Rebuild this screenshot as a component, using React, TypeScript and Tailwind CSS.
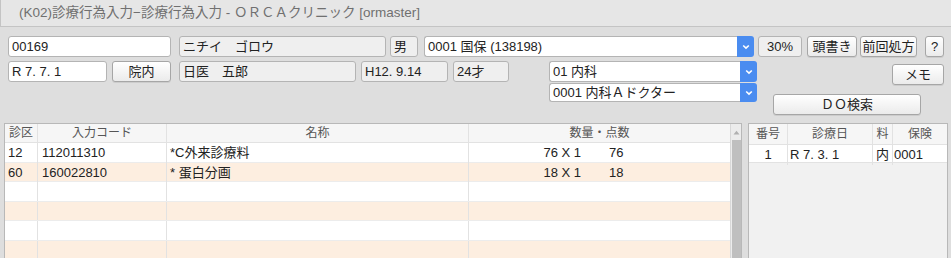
import type { ReactNode } from "react";

const font = {
  fontFamily:
    '"Liberation Sans", "Noto Sans CJK JP", sans-serif',
};

function Field({
  w,
  children,
  ro = false,
  className = "",
}: {
  w: string;
  children?: ReactNode;
  ro?: boolean;
  className?: string;
}) {
  return (
    <div
      className={`flex h-[21px] items-center rounded-[3px] border border-[#b4b4b4] px-[3px] text-[13px] text-[#222] ${
        ro ? "bg-[#efefef]" : "bg-white"
      } ${w} ${className}`}
    >
      {children}
    </div>
  );
}

function Btn({
  w,
  children,
  className = "",
}: {
  w: string;
  children: ReactNode;
  className?: string;
}) {
  return (
    <div
      className={`flex h-[21px] items-center justify-center rounded-[3px] border border-[#a6a6a6] bg-gradient-to-b from-[#ffffff] to-[#ebebeb] text-[13px] text-[#222] shadow-[0_1px_0_rgba(0,0,0,0.08)] ${w} ${className}`}
    >
      {children}
    </div>
  );
}

function Select({
  w,
  h = "h-[21px]",
  children,
  className = "",
}: {
  w: string;
  h?: string;
  children: ReactNode;
  className?: string;
}) {
  return (
    <div
      className={`flex ${h} ${w} ${className}`}
    >
      <div className="flex flex-1 items-center rounded-l-[3px] border border-r-0 border-[#b4b4b4] bg-white px-[3px] text-[13px] text-[#222]">
        {children}
      </div>
      <div className="flex w-[17px] items-center justify-center rounded-r-[3px] bg-[#4a8cf0]">
        <svg width="8" height="6" viewBox="0 0 8 6">
          <path
            d="M1.2 1.5 L4 4.2 L6.8 1.5"
            fill="none"
            stroke="white"
            strokeWidth="1.6"
          />
        </svg>
      </div>
    </div>
  );
}

const rows = [
  { k: "12", code: "112011310", name: "*C外来診療料", q: "76 X 1", p: "76" },
  { k: "60", code: "160022810", name: "* 蛋白分画", q: "18 X 1", p: "18" },
  null,
  null,
  null,
  null,
];

export default function App() {
  return (
    <div
      className="h-[258px] w-[951px] overflow-hidden bg-[#dedede]"
      style={font}
    >
      {/* Title */}
      <div className="flex h-[27px] items-center border-b border-l border-[#c4c4c4] bg-[#e6e6e6] pl-[18px] text-[13.5px] text-[#707070]">
        (K02)診療行為入力−診療行為入力 - ＯＲＣＡクリニック [ormaster]
      </div>

      {/* Row 1 */}
      <div className="mt-[9px] flex items-start pl-[8px]">
        <Field w="w-[163px]">00169</Field>
        <Field w="w-[207px]" ro className="ml-[8px]">
          ニチイ　ゴロウ
        </Field>
        <Field w="w-[28px]" ro className="ml-[4px]">
          男
        </Field>
        <Select w="w-[330px]" className="ml-[6px]">
          0001 国保 (138198)
        </Select>
        <Field w="w-[44px]" ro className="ml-[4px] justify-center">
          30%
        </Field>
        <Btn w="w-[50px]" className="ml-[5px]">
          頭書き
        </Btn>
        <Btn w="w-[57px]" className="ml-[3px]">
          前回処方
        </Btn>
        <Btn w="w-[19px]" className="ml-[8px]">
          ?
        </Btn>
      </div>

      {/* Row 2 */}
      <div className="mt-[4px] flex items-start pl-[8px]">
        <Field w="w-[99px]">R 7. 7. 1</Field>
        <Btn w="w-[59px]" className="ml-[5px]">
          院内
        </Btn>
        <Field w="w-[177px]" ro className="ml-[8px]">
          日医　五郎
        </Field>
        <Field w="w-[87px]" ro className="ml-[5px]">
          H12. 9.14
        </Field>
        <Field w="w-[56px]" ro className="ml-[5px]">
          24才
        </Field>
        <div className="ml-[40px] flex flex-col gap-[1px]">
          <Select w="w-[208px]">01 内科</Select>
          <Select w="w-[208px]" h="h-[19px]">
            0001 内科Ａドクター
          </Select>
        </div>
        <div className="flex w-[187px] flex-col">
          <Btn w="w-[52px]" className="mt-[3px] self-end">
            メモ
          </Btn>
          <Btn w="w-[148px]" className="ml-[16px] mt-[9px] h-[20px]">
            ＤＯ検索
          </Btn>
        </div>
      </div>

      {/* Tables */}
      <div className="mt-[8px] flex items-start pl-[4px]">
        {/* Left table */}
        <div className="flex h-[140px] w-[738px] border border-[#b8b8b8] bg-white">
          <div className="flex-1">
            <div className="grid h-[19px] grid-cols-[33px_129px_302px_1fr] border-b border-[#e2e2e2] bg-[#f6f6f6] text-[12px] text-[#555]">
              <div className="flex items-center justify-center border-r border-[#e2e2e2]">
                診区
              </div>
              <div className="flex items-center justify-center border-r border-[#e2e2e2]">
                入力コード
              </div>
              <div className="flex items-center justify-center border-r border-[#e2e2e2]">
                名称
              </div>
              <div className="flex items-center justify-center">
                数量・点数
              </div>
            </div>
            {rows.map((r, i) => (
              <div
                key={i}
                className={`grid h-[19.5px] grid-cols-[33px_129px_302px_1fr] border-b border-[#ececec] text-[13px] text-[#222] ${
                  i % 2 === 1 ? "bg-[#fdeee0]" : "bg-white"
                }`}
              >
                <div className="flex items-center border-r border-[#e2e2e2] pl-[3px]">
                  {r?.k}
                </div>
                <div className="flex items-center border-r border-[#e2e2e2] pl-[4px]">
                  {r?.code}
                </div>
                <div className="flex items-center border-r border-[#e2e2e2] pl-[3px]">
                  {r?.name}
                </div>
                <div className="flex items-center">
                  {r && (
                    <>
                      <span className="w-[112px] text-right">{r.q}</span>
                      <span className="ml-[28px]">{r.p}</span>
                    </>
                  )}
                </div>
              </div>
            ))}
          </div>
          {/* Scrollbar */}
          <div className="flex w-[11px] flex-col items-center border-l border-[#d8d8d8] bg-[#ececec]">
            <svg width="7" height="5" viewBox="0 0 7 5" className="mt-[6px]">
              <path d="M0.5 4.5 L3.5 0.8 L6.5 4.5 Z" fill="#b0b0b0" />
            </svg>
            <div className="mt-[5px] w-[9px] flex-1 bg-[#bfbfbf]" />
          </div>
        </div>

        {/* Right table */}
        <div className="ml-[6px] h-[140px] w-[200px] border border-[#b8b8b8] bg-[#f1f1f1]">
          <div className="grid h-[21px] grid-cols-[39px_85px_20px_1fr] border-b border-[#e2e2e2] bg-[#f6f6f6] text-[12px] text-[#555]">
            <div className="flex items-center justify-center border-r border-[#e2e2e2]">
              番号
            </div>
            <div className="flex items-center justify-center border-r border-[#e2e2e2]">
              診療日
            </div>
            <div className="flex items-center justify-center border-r border-[#e2e2e2]">
              料
            </div>
            <div className="flex items-center justify-center">保険</div>
          </div>
          <div className="grid h-[18px] grid-cols-[39px_85px_20px_1fr] border-b border-[#e2e2e2] bg-white text-[13px] text-[#222]">
            <div className="flex items-center justify-center border-r border-[#e2e2e2]">
              1
            </div>
            <div className="flex items-center border-r border-[#e2e2e2] pl-[2px]">
              R 7. 3. 1
            </div>
            <div className="flex items-center justify-center border-r border-[#e2e2e2]">
              内
            </div>
            <div className="flex items-center pl-[1px]">0001</div>
          </div>
        </div>
      </div>
    </div>
  );
}
